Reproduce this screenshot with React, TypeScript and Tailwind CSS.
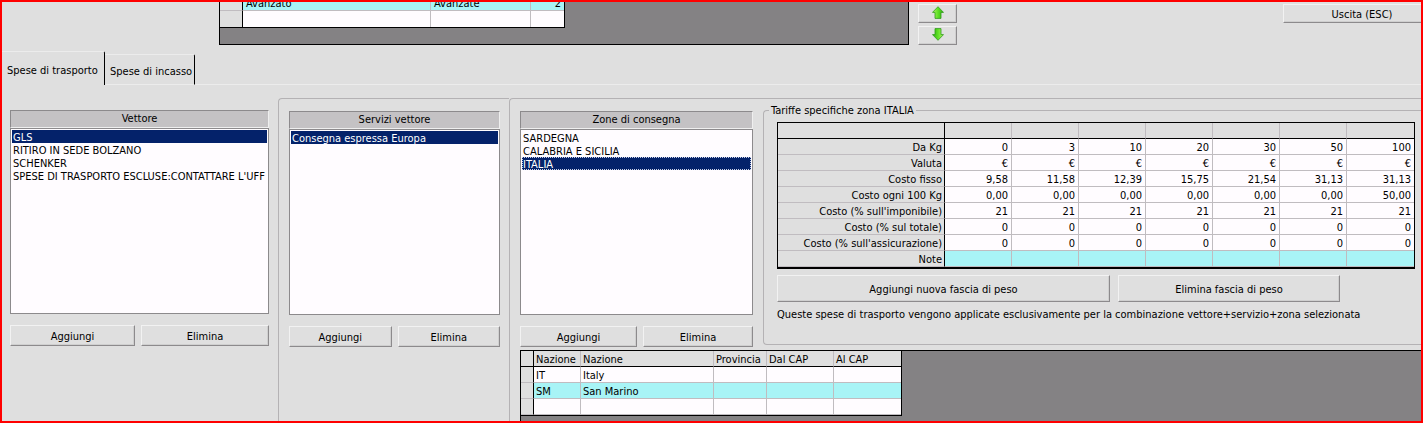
import { useState, type ReactNode } from "react";
import { clsx } from "clsx";

const tariffRows: { label: string; values: string[] }[] = [
  { label: "Da Kg", values: ["0", "3", "10", "20", "30", "50", "100"] },
  { label: "Valuta", values: ["€", "€", "€", "€", "€", "€", "€"] },
  { label: "Costo fisso", values: ["9,58", "11,58", "12,39", "15,75", "21,54", "31,13", "31,13"] },
  { label: "Costo ogni 100 Kg", values: ["0,00", "0,00", "0,00", "0,00", "0,00", "0,00", "50,00"] },
  { label: "Costo (% sull'imponibile)", values: ["21", "21", "21", "21", "21", "21", "21"] },
  { label: "Costo (% sul totale)", values: ["0", "0", "0", "0", "0", "0", "0"] },
  { label: "Costo (% sull'assicurazione)", values: ["0", "0", "0", "0", "0", "0", "0"] },
  { label: "Note", values: ["", "", "", "", "", "", ""] },
];

const areaRows = [
  ["IT", "Italy", "", "", ""],
  ["SM", "San Marino", "", "", ""],
  ["", "", "", "", ""],
];

function Button({ children, className, label }: { children: ReactNode; className?: string; label?: string }) {
  return (
    <button
      type="button"
      aria-label={label}
      className={clsx(
        "flex items-center justify-center border border-t-[#f2f2f2] border-r-[#8c8a8c] border-b-[#8c8a8c] border-l-[#f2f2f2] bg-[#dfdfdf] whitespace-nowrap shadow-[inset_-1px_-1px_0_#cfcfcf]",
        label ? "pb-0.5" : "pt-0.5",
        className,
      )}
    >
      {children}
    </button>
  );
}

function Arrow({ down = false }: { down?: boolean }) {
  const id = down ? "arrow-down" : "arrow-up";
  return (
    <svg viewBox="0 0 12 13" className={clsx("h-[13px] w-3", down && "rotate-180")} aria-hidden="true">
      <defs>
        <linearGradient id={id} x1="0" x2="1">
          <stop offset="0" stopColor="#b4f56a" />
          <stop offset="0.5" stopColor="#5fe024" />
          <stop offset="1" stopColor="#2fae12" />
        </linearGradient>
      </defs>
      <path d="M6 0.7 11.5 6.4H9V12.4H3V6.4H0.5Z" fill={`url(#${id})`} stroke="#2f9a1c" strokeWidth="0.8" strokeLinejoin="round" />
    </svg>
  );
}

function ListPanel({ id, title, items, initial, split, focused = false, className }: {
  id: string;
  title: string;
  items: string[];
  initial: number;
  split: string;
  focused?: boolean;
  className?: string;
}) {
  const [selected, setSelected] = useState(initial);
  return (
    <section className={className}>
      <h2
        id={id}
        className="h-[18px] border border-t-[#8c8a8c] border-r-[#efefef] border-b-[#efefef] border-l-[#8c8a8c] bg-[#c4c2c4] text-center leading-4"
      >
        {title}
      </h2>
      <ul role="listbox" aria-labelledby={id} className="h-[186px] overflow-hidden border border-[#8c8a8c] bg-[#fffcff] p-px">
        {items.map((item, i) => (
          <li
            key={item}
            role="option"
            aria-selected={i === selected}
            onClick={() => setSelected(i)}
            className={clsx(
              "h-[13px] cursor-default overflow-hidden pl-px leading-[15px] whitespace-nowrap",
              i === selected && "bg-[#04226a] text-white",
              i === selected && focused && "outline-1 -outline-offset-1 outline-[#c8d0e8] outline-dotted",
            )}
          >
            {item}
          </li>
        ))}
      </ul>
      <div className={clsx("mt-[11px] grid gap-1.5", split)}>
        <Button className="h-[21px]">Aggiungi</Button>
        <Button className="h-[21px]">Elimina</Button>
      </div>
    </section>
  );
}

function Tab({ active, onSelect, children }: { active: boolean; onSelect: () => void; children: ReactNode }) {
  return (
    <button
      type="button"
      role="tab"
      aria-selected={active}
      onClick={onSelect}
      className={clsx(
        "rounded-tr-xs border-t border-r border-t-[#ececec] border-r-black pt-1 pl-[5px] text-left whitespace-nowrap",
        active ? "h-[34px] w-[103px]" : "h-[31px] w-[90px] border-b border-b-[#ececec]",
      )}
    >
      {children}
    </button>
  );
}

function PlanTable() {
  const cell = "h-4 border-r border-b border-[#c0bcc0] px-[3px] pt-0.5";
  return (
    <table className="-mt-[7px] w-[345px] table-fixed border-separate border-spacing-0 border-r border-b border-black">
      <colgroup>
        <col className="w-[23px]" />
        <col className="w-[188px]" />
        <col className="w-[100px]" />
        <col />
      </colgroup>
      <tbody>
        <tr>
          <th className="border-r border-b border-r-black border-b-[#c0bcc0] bg-[#dfdfdf]" />
          <td className={clsx(cell, "bg-[#a8f4f6]")}>Avanzato</td>
          <td className={clsx(cell, "bg-[#a8f4f6]")}>Avanzate</td>
          <td className="border-b border-[#c0bcc0] bg-[#a8f4f6] px-[3px] pt-0.5 text-right">2</td>
        </tr>
        <tr>
          <th className="border-r border-black bg-[#dfdfdf]" />
          <td className="h-4 border-r border-[#c0bcc0] bg-[#fffcff]" />
          <td className="border-r border-[#c0bcc0] bg-[#fffcff]" />
          <td className="bg-[#fffcff]" />
        </tr>
      </tbody>
    </table>
  );
}

function TariffTable() {
  return (
    <table className="w-full table-fixed border-separate border-spacing-0 border border-b-2 border-black text-right">
      <colgroup>
        <col className="w-[167px]" />
        <col span={7} />
      </colgroup>
      <thead>
        <tr>
          <th className="h-4 border-r border-b border-black" />
          {tariffRows[0].values.map((v, i) => (
            <th key={v} className={clsx("border-b border-b-black", i < 6 && "border-r border-r-[#c0bcc0]")} />
          ))}
        </tr>
      </thead>
      <tbody>
        {tariffRows.map((row) => (
          <tr key={row.label}>
            <th scope="row" className="h-4 border-r border-b border-r-black border-b-[#c0bcc0] pt-0.5 pr-[2px] text-right font-normal whitespace-nowrap">
              {row.label}
            </th>
            {row.values.map((v, i) => (
              <td
                key={i}
                className={clsx(
                  "border-b border-[#c0bcc0] pt-0.5 pr-[3px]",
                  i < 6 && "border-r",
                  row.label === "Note" ? "bg-[#a8f4f6]" : "bg-[#fffcff]",
                )}
              >
                {v}
              </td>
            ))}
          </tr>
        ))}
      </tbody>
    </table>
  );
}

function AreaTable() {
  const headers = ["Nazione", "Nazione", "Provincia", "Dal CAP", "Al CAP"];
  return (
    <table className="w-[381px] table-fixed border-separate border-spacing-0 border-r border-b border-black text-left">
      <colgroup>
        <col className="w-[13px]" />
        <col className="w-[47px]" />
        <col className="w-[133px]" />
        <col className="w-[53px]" />
        <col className="w-[67px]" />
        <col />
      </colgroup>
      <thead>
        <tr>
          <th className="h-4 border-r border-b border-black bg-[#dfdfdf]" />
          {headers.map((h, i) => (
            <th
              key={i}
              scope="col"
              className={clsx("border-b border-b-black bg-[#dfdfdf] pt-0.5 pl-[2px] font-normal whitespace-nowrap", i < 4 && "border-r border-r-[#c0bcc0]")}
            >
              {h}
            </th>
          ))}
        </tr>
      </thead>
      <tbody>
        {areaRows.map((row, r) => (
          <tr key={r}>
            <th className="h-4 border-r border-b border-r-black border-b-[#c0bcc0] bg-[#dfdfdf]" />
            {row.map((v, i) => (
              <td
                key={i}
                className={clsx("border-b border-[#c0bcc0] pt-0.5 pl-[2px]", i < 4 && "border-r", r === 1 ? "bg-[#a8f4f6]" : "bg-[#fffcff]")}
              >
                {v}
              </td>
            ))}
          </tr>
        ))}
      </tbody>
    </table>
  );
}

export default function App() {
  const [tab, setTab] = useState(0);
  return (
    <main className="flex min-h-screen flex-col overflow-hidden border-2 border-[#ff0000] bg-[#dfdfdf] font-['DejaVu_Sans_Condensed','DejaVu_Sans',sans-serif] text-[11px] leading-[13px] text-black">
      <header className="flex items-start overflow-hidden pb-1.5 pl-[217px]">
        <div className="h-[43px] w-[690px] overflow-hidden border-r border-b border-l border-black bg-[#848284]">
          <PlanTable />
        </div>
        <div className="mt-0.5 ml-[9px] flex w-[39px] flex-col gap-[3px]">
          <Button label="Sposta su" className="h-[19px]">
            <Arrow />
          </Button>
          <Button label="Sposta giù" className="h-[19px]">
            <Arrow down />
          </Button>
        </div>
        <Button className="mt-0.5 -mr-5 ml-auto h-[19px] w-[158px]">Uscita (ESC)</Button>
      </header>

      <div role="tablist" className="flex items-end">
        <Tab active={tab === 0} onSelect={() => setTab(0)}>
          Spese di trasporto
        </Tab>
        <Tab active={tab === 1} onSelect={() => setTab(1)}>
          Spese di incasso
        </Tab>
        <div className="flex-1 border-b border-[#ececec]" />
      </div>

      <div className="grid flex-1 grid-cols-[276px_231px_minmax(0,1fr)] pt-[13px]">
        <ListPanel
          id="vettore"
          title="Vettore"
          items={["GLS", "RITIRO IN SEDE BOLZANO", "SCHENKER", "SPESE DI TRASPORTO ESCLUSE:CONTATTARE L'UFF"]}
          initial={0}
          split="grid-cols-[125fr_128fr]"
          className="pt-3 pr-[9px] pl-2"
        />
        <ListPanel
          id="servizi"
          title="Servizi vettore"
          items={["Consegna espressa Europa"]}
          initial={0}
          split="grid-cols-2"
          className="rounded-tl border-t border-l border-[#b4b2b4] pt-3 pr-[9px] pl-2.5"
        />
        <div className="flex flex-col rounded-tl border-t border-l border-[#b4b2b4] pl-2.5">
          <div className="flex items-start gap-2.5">
            <ListPanel
              id="zone"
              title="Zone di consegna"
              items={["SARDEGNA", "CALABRIA E SICILIA", "ITALIA"]}
              initial={2}
              focused
              split="grid-cols-[117fr_110fr]"
              className="w-[233px] shrink-0 pt-3"
            />
            <fieldset className="mt-[5px] min-w-0 flex-1 rounded-l border border-r-0 border-[#b4b2b4] pr-1.5 pb-[23px] pl-[13px]">
              <legend className="-ml-2 px-0.5">Tariffe specifiche zona ITALIA</legend>
              <div className="pt-[5px]">
                <TariffTable />
              </div>
              <div className="mt-1.5 flex gap-2">
                <Button className="h-[27px] w-[333px]">Aggiungi nuova fascia di peso</Button>
                <Button className="h-[27px] w-[222px]">Elimina fascia di peso</Button>
              </div>
              <p className="mt-1.5 whitespace-nowrap">
                Queste spese di trasporto vengono applicate esclusivamente per la combinazione vettore+servizio+zona selezionata
              </p>
            </fieldset>
          </div>
          <div className="mt-[3px] flex-1 border-t border-l border-black bg-[#848284]">
            <AreaTable />
          </div>
        </div>
      </div>
    </main>
  );
}
